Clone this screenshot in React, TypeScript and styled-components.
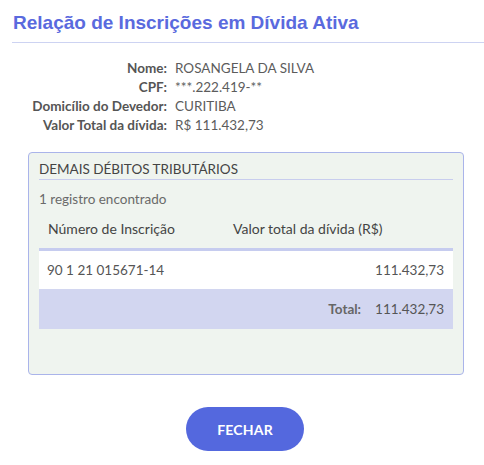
import React from "react";
import styled, { createGlobalStyle } from "styled-components";

const GlobalStyle = createGlobalStyle`
  body {
    margin: 0;
    background: #fff;
    font-family: Lato, "Open Sans", sans-serif;
    color: #4a4a4a;
  }
`;

const debtor = [
  { label: "Nome:", value: "ROSANGELA DA SILVA" },
  { label: "CPF:", value: "***.222.419-**" },
  { label: "Domicílio do Devedor:", value: "CURITIBA" },
  { label: "Valor Total da dívida:", value: "R$ 111.432,73" },
];

export default function App() {
  return (
    <>
      <GlobalStyle />
      <Page>
        <Title>Relação de Inscrições em Dívida Ativa</Title>
        <InfoGrid>
          {debtor.map((d) => (
            <React.Fragment key={d.label}>
              <InfoLabel>{d.label}</InfoLabel>
              <InfoValue>{d.value}</InfoValue>
            </React.Fragment>
          ))}
        </InfoGrid>
        <Panel>
          <PanelTitle>DEMAIS DÉBITOS TRIBUTÁRIOS</PanelTitle>
          <Count>1 registro encontrado</Count>
          <Table>
            <HeadRow>
              <HeadCell>Número de Inscrição</HeadCell>
              <HeadCell>Valor total da dívida (R$)</HeadCell>
            </HeadRow>
            <BodyRow>
              <Cell>90 1 21 015671-14</Cell>
              <Cell $right>111.432,73</Cell>
            </BodyRow>
            <TotalRow>
              <TotalLabel>Total:</TotalLabel>
              <Cell>111.432,73</Cell>
            </TotalRow>
          </Table>
        </Panel>
        <Actions>
          <CloseButton>FECHAR</CloseButton>
        </Actions>
      </Page>
    </>
  );
}

const Page = styled.div`
  padding: 12px 0 0 12px;
`;

const Title = styled.h1`
  margin: 0;
  padding: 0 0 8px 1px;
  font-family: "Liberation Sans", Arial, sans-serif;
  font-weight: 700;
  font-size: 19px;
  line-height: 22px;
  color: #5a6ade;
  border-bottom: 1px solid #cdd3f2;
`;

const InfoGrid = styled.div`
  display: grid;
  grid-template-columns: 155px auto;
  column-gap: 8px;
  margin-top: 16px;
  font-size: 13.5px;
  line-height: 19px;
`;

const InfoLabel = styled.div`
  text-align: right;
  font-weight: 700;
  color: #555;
`;

const InfoValue = styled.div`
  color: #5c5c5c;
  font-weight: 400;
`;

const Panel = styled.div`
  margin: 17px 20px 0 16px;
  height: 223px;
  box-sizing: border-box;
  border: 1px solid #aab4ea;
  border-radius: 4px;
  background: #eff4ef;
  padding: 7px 10px 0 10px;
`;

const PanelTitle = styled.div`
  font-size: 13.5px;
  line-height: 18px;
  color: #444;
  padding-bottom: 1px;
  border-bottom: 1px solid #c8cdee;
`;

const Count = styled.div`
  margin-top: 11px;
  font-size: 13.5px;
  line-height: 16px;
  color: #6a6a6a;
`;

const Table = styled.div`
  margin-top: 5px;
`;

const HeadRow = styled.div`
  display: grid;
  grid-template-columns: 185px 1fr;
  padding: 8px 10px 11px 9px;
  border-bottom: 3px solid #c6ccef;
`;

const HeadCell = styled.div`
  font-size: 14px;
  line-height: 17px;
  color: #444;
`;

const BodyRow = styled.div`
  display: flex;
  justify-content: space-between;
  align-items: center;
  height: 38px;
  padding: 0 9px 0 8px;
  background: #fff;
`;

const Cell = styled.div<{ $right?: boolean }>`
  font-size: 13.5px;
  color: #555;
  text-align: ${(p) => (p.$right ? "right" : "left")};
`;

const TotalRow = styled.div`
  display: flex;
  justify-content: flex-end;
  align-items: center;
  gap: 14px;
  height: 40px;
  padding: 0 9px;
  background: #d2d6f0;
`;

const TotalLabel = styled.div`
  font-size: 13.5px;
  font-weight: 700;
  color: #666;
`;

const Actions = styled.div`
  display: flex;
  justify-content: center;
  margin-top: 32px;
  padding-right: 6px;
`;

const CloseButton = styled.button`
  width: 118px;
  height: 44px;
  border: none;
  border-radius: 22px;
  background: #5468de;
  color: #fff;
  font-family: Lato, sans-serif;
  font-weight: 700;
  font-size: 14px;
  letter-spacing: 0.2px;
  cursor: pointer;
`;
